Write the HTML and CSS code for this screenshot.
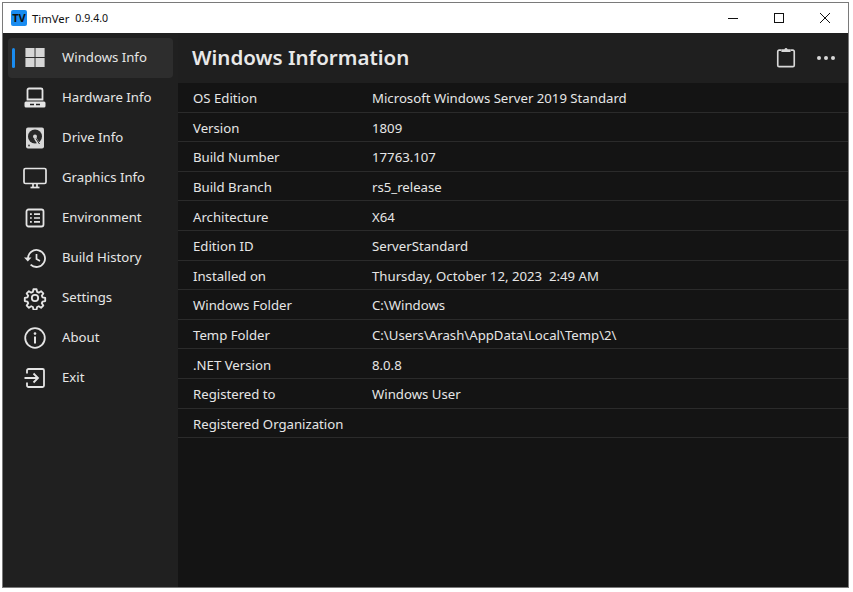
FILE: index.html
```html
<!DOCTYPE html>
<html lang="en">
<head>
    <meta charset="UTF-8">
    <meta name="viewport" content="width=device-width, initial-scale=1.0">
    <title>TimVer</title>
    <link rel="stylesheet" href="styles.css">
</head>
<body>
    <div class="window">
        <div class="titlebar">
            <div class="app-logo">TV</div>
            <span class="app-name">TimVer</span>
            <span class="app-version">0.9.4.0</span>
            <div class="caption-buttons">
                <div class="caption-btn">
                    <svg width="12" height="12" viewBox="0 0 12 12"><path d="M1 6.500h10" stroke="#111" fill="none"/></svg>
                </div>
                <div class="caption-btn">
                    <svg width="12" height="12" viewBox="0 0 12 12"><rect x="1.500" y="1.500" width="9" height="9" stroke="#111" fill="none"/></svg>
                </div>
                <div class="caption-btn">
                    <svg width="12" height="12" viewBox="0 0 12 12"><path d="M1 1l10 10M11 1L1 11" stroke="#111" fill="none"/></svg>
                </div>
            </div>
        </div>
        <div class="main">
            <nav class="sidebar">
                <div class="nav-item active">
                    <svg class="nav-icon" viewBox="0 0 24 24"><path d="M2 2h9.500v9.500H2zM12.500 2H22v9.500h-9.500zM2 12.500h9.500V22H2zM12.500 12.500H22V22h-9.500z" transform="translate(0.500 0) scale(0.96)" fill="#d6d6d6"/></svg>
                    <span>Windows Info</span>
                </div>
                <div class="nav-item">
                    <svg class="nav-icon" viewBox="0 0 24 24"><path d="M6 2.500h12a1.500 1.500 0 0 1 1.500 1.500v9.500h-15V4A1.500 1.500 0 0 1 6 2.500z" fill="none" stroke="#e4e4e4" stroke-width="1.800"/><path d="M3 15.500h18a1.500 1.500 0 0 1 1.500 1.500v3a1.500 1.500 0 0 1-1.500 1.500H3A1.500 1.500 0 0 1 1.500 20v-3A1.500 1.500 0 0 1 3 15.500z" fill="#e4e4e4"/><path d="M7 18.500h4M13 18.500h4" stroke="#202020" stroke-width="1.500"/></svg>
                    <span>Hardware Info</span>
                </div>
                <div class="nav-item">
                    <svg class="nav-icon" viewBox="0 0 24 24"><rect x="3" y="1.500" width="18" height="21" rx="2" fill="#d8d8d8"/><circle cx="12" cy="10.500" r="7" fill="#2a2a2a"/><circle cx="12" cy="10.500" r="2" fill="#d8d8d8"/><path d="M12 12l4.500 7" stroke="#d8d8d8" stroke-width="2.500"/><path d="M13 12.500l3.500 5.500" stroke="#2a2a2a" stroke-width="1"/><circle cx="6" cy="19.500" r="1" fill="#444"/></svg>
                    <span>Drive Info</span>
                </div>
                <div class="nav-item">
                    <svg class="nav-icon" viewBox="0 0 24 24"><rect x="1" y="2.500" width="22" height="15" rx="1.500" fill="none" stroke="#e4e4e4" stroke-width="1.700"/><path d="M10 18v3M14 18v3" stroke="#e4e4e4" stroke-width="1.700"/><path d="M7.500 21.500h9" stroke="#e4e4e4" stroke-width="1.700"/></svg>
                    <span>Graphics Info</span>
                </div>
                <div class="nav-item">
                    <svg class="nav-icon" viewBox="0 0 24 24"><rect x="3.500" y="3.500" width="17" height="17" rx="2" fill="none" stroke="#e4e4e4" stroke-width="1.800"/><path d="M7 8.200h1.800M7 12h1.800M7 15.800h1.800M11 8.200h6M11 12h6M11 15.800h6" stroke="#e4e4e4" stroke-width="1.700"/></svg>
                    <span>Environment</span>
                </div>
                <div class="nav-item">
                    <svg class="nav-icon" viewBox="0 0 24 24"><path d="M5 12.500a8.500 8.500 0 1 1 2.600 6.100" fill="none" stroke="#e4e4e4" stroke-width="1.800"/><path d="M1 11.500h7.500L4.800 15.500z" fill="#e4e4e4"/><path d="M13.500 8v5l3.500 2" fill="none" stroke="#e4e4e4" stroke-width="1.700"/></svg>
                    <span>Build History</span>
                </div>
                <div class="nav-item">
                    <svg class="nav-icon" viewBox="0 0 24 24"><g transform="translate(12 12) scale(0.92) translate(-12 -11)"><path d="M10.300 2.500h3.400l.6 2.900 1.800.8 2.500-1.600 2.400 2.400-1.600 2.500.8 1.800 2.900.6v3.400l-2.900.6-.8 1.800 1.600 2.500-2.400 2.400-2.500-1.600-1.800.8-.6 2.900h-3.400l-.6-2.900-1.800-.8-2.500 1.600-2.400-2.400 1.600-2.500-.8-1.800-2.900-.6v-3.400l2.900-.6.8-1.800-1.600-2.500 2.400-2.400 2.500 1.600 1.800-.8z" transform="translate(0 -1)" fill="none" stroke="#e4e4e4" stroke-width="2" stroke-linejoin="round"/></g><circle cx="12" cy="12" r="3.200" fill="none" stroke="#e4e4e4" stroke-width="1.800"/></svg>
                    <span>Settings</span>
                </div>
                <div class="nav-item">
                    <svg class="nav-icon" viewBox="0 0 24 24"><circle cx="12" cy="12" r="9.800" fill="none" stroke="#e4e4e4" stroke-width="1.800"/><circle cx="12" cy="7.600" r="1.300" fill="#e4e4e4"/><path d="M12 10.500v7" stroke="#e4e4e4" stroke-width="2"/></svg>
                    <span>About</span>
                </div>
                <div class="nav-item">
                    <svg class="nav-icon" viewBox="0 0 24 24"><path d="M4 7.500V4.500A1.500 1.500 0 0 1 5.500 3h14A1.500 1.500 0 0 1 21 4.500v15a1.500 1.500 0 0 1-1.500 1.500h-14A1.500 1.500 0 0 1 4 19.500v-3" fill="none" stroke="#e4e4e4" stroke-width="1.800"/><path d="M1.500 12h13M10.500 7.500L15 12l-4.500 4.500" fill="none" stroke="#e4e4e4" stroke-width="1.800"/></svg>
                    <span>Exit</span>
                </div>
            </nav>
            <div class="content">
                <div class="content-header">
                    <h1>Windows Information</h1>
                    <div class="header-actions">
                        <svg class="clipboard-icon" viewBox="0 0 24 24"><path d="M7 4.500H4.500A1.500 1.500 0 0 0 3 6v15a1.500 1.500 0 0 0 1.500 1.500h15A1.500 1.500 0 0 0 21 21V6a1.500 1.500 0 0 0-1.500-1.500H17" fill="none" stroke="#d8d8d8" stroke-width="1.800"/><path d="M7 6.500V3.500h3.300a1.800 1.800 0 0 1 3.400 0H17v3z" fill="#d8d8d8"/></svg>
                        <div class="more-dots"><i></i><i></i><i></i></div>
                    </div>
                </div>
                <div class="info-list">
                    <div class="info-row"><span class="info-label">OS Edition</span><span>Microsoft Windows Server 2019 Standard</span></div>
                    <div class="info-row"><span class="info-label">Version</span><span>1809</span></div>
                    <div class="info-row"><span class="info-label">Build Number</span><span>17763.107</span></div>
                    <div class="info-row"><span class="info-label">Build Branch</span><span>rs5_release</span></div>
                    <div class="info-row"><span class="info-label">Architecture</span><span>X64</span></div>
                    <div class="info-row"><span class="info-label">Edition ID</span><span>ServerStandard</span></div>
                    <div class="info-row"><span class="info-label">Installed on</span><span>Thursday, October 12, 2023 &nbsp;2:49 AM</span></div>
                    <div class="info-row"><span class="info-label">Windows Folder</span><span>C:\Windows</span></div>
                    <div class="info-row"><span class="info-label">Temp Folder</span><span>C:\Users\Arash\AppData\Local\Temp\2\</span></div>
                    <div class="info-row"><span class="info-label">.NET Version</span><span>8.0.8</span></div>
                    <div class="info-row"><span class="info-label">Registered to</span><span>Windows User</span></div>
                    <div class="info-row"><span class="info-label">Registered Organization</span><span></span></div>
                </div>
            </div>
        </div>
    </div>
</body>
</html>
```

FILE: styles.css
```css
html, body {
    height: 100%;
}
body {
    margin: 0;
    padding: 2px 4px 4px 2px;
    box-sizing: border-box;
    background-color: #fff;
    font-family: "Noto Sans", "Open Sans", Arial, sans-serif;
    font-size: 13.2px;
}
.window {
    height: 100%;
    display: flex;
    flex-direction: column;
    border: 1px solid #7a7a7a;
    box-sizing: border-box;
}
.titlebar {
    height: 30px;
    flex: none;
    display: flex;
    align-items: center;
    padding-left: 8px;
    background-color: #fff;
    color: #111;
    font-size: 11.3px;
}
.app-logo {
    width: 16px;
    height: 16px;
    border-radius: 2px;
    background-color: #1a8cf0;
    color: #111;
    font-size: 11px;
    font-weight: 700;
    line-height: 16px;
    text-align: center;
    margin-right: 5px;
}
.app-version {
    margin-left: 6px;
    font-size: 10.6px;
}
.caption-buttons {
    margin-left: auto;
    display: flex;
}
.caption-btn {
    width: 46px;
    height: 30px;
    display: flex;
    align-items: center;
    justify-content: center;
}
.main {
    flex: 1;
    display: flex;
    min-height: 0;
}
.sidebar {
    width: 175px;
    flex: none;
    box-sizing: border-box;
    padding: 5px 5px 0 5px;
    background-color: #202020;
    color: #e6e6e6;
}
.nav-item {
    position: relative;
    height: 40px;
    display: flex;
    align-items: center;
    padding-left: 15px;
    border-radius: 4px;
}
.nav-item span {
    margin-top: -3px;
}
.nav-item.active {
    background-color: #2d2d2d;
}
.nav-item.active::before {
    content: "";
    position: absolute;
    left: 4px;
    top: 10px;
    width: 3px;
    height: 20px;
    border-radius: 2px;
    background-color: #1a8cf0;
}
.nav-icon {
    width: 24px;
    height: 24px;
    flex: none;
    margin-right: 15px;
}
.content {
    flex: 1;
    display: flex;
    flex-direction: column;
    background-color: #141414;
    color: #e6e6e6;
}
.content-header {
    height: 50px;
    flex: none;
    display: flex;
    align-items: center;
    padding: 0 13px 0 14px;
    background-color: #1f1f1f;
}
h1 {
    margin: -2px 0 0;
    font-size: 20.5px;
    font-weight: 600;
    color: #e8e8e8;
}
.header-actions {
    margin-left: auto;
    display: flex;
    align-items: center;
    gap: 20px;
}
.clipboard-icon {
    width: 22px;
    height: 22px;
    margin-top: -3px;
}
.more-dots {
    display: flex;
    gap: 3px;
}
.more-dots i {
    width: 4px;
    height: 4px;
    border-radius: 50%;
    background-color: #d8d8d8;
}
.info-row {
    height: 29.6px;
    box-sizing: border-box;
    display: flex;
    align-items: center;
    padding: 2px 0 0 15px;
    border-bottom: 1px solid #2b2b2b;
}
.info-label {
    width: 179px;
    flex: none;
}
```
